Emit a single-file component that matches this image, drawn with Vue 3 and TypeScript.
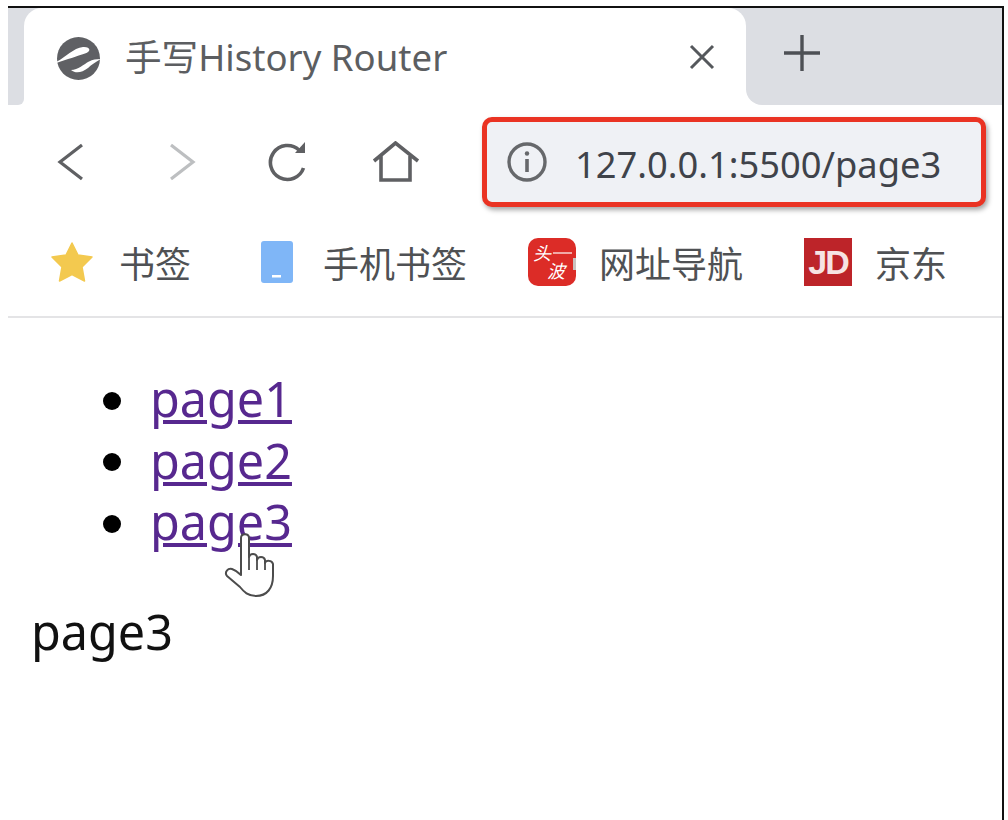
<script setup lang="ts">
interface Bookmark {
  label: string
  kind: 'star' | 'phone' | 'wave' | 'jd'
}

const bookmarks: Bookmark[] = [
  { label: '书签', kind: 'star' },
  { label: '手机书签', kind: 'phone' },
  { label: '网址导航', kind: 'wave' },
  { label: '京东', kind: 'jd' },
]

const pages = ['page1', 'page2', 'page3']
</script>

<template>
  <div class="frame">
    <div class="tabstrip">
      <div class="tab-gutter"></div>
      <div class="tab">
        <svg class="favicon" width="43" height="43" viewBox="0 0 43 43">
          <circle cx="21.500" cy="21.500" r="21.500" fill="#5f6064" />
          <path d="M-1 25 C8 21 16 11 26 10 C33 9.500 35 14 28 16.500 C20 19 9 23 -1 26 Z" fill="#fff" />
          <path d="M14 33 C21 33 27 27 32 24.500 C36 22.500 40 22 44 22 C39 25 35 27.500 31 31 C25 35.500 19 37 14 33 Z" fill="#fff" />
        </svg>
        <span class="tab-title">手写History Router</span>
        <svg class="tab-close" width="26" height="26" viewBox="0 0 26 26">
          <path d="M2 2 L24 24 M24 2 L2 24" stroke="#55585c" stroke-width="3" />
        </svg>
      </div>
      <div class="tab-rest">
        <svg class="new-tab" width="38" height="38" viewBox="0 0 38 38">
          <path d="M19 1 V37 M1 19 H37" stroke="#4d5055" stroke-width="3.400" />
        </svg>
      </div>
    </div>

    <div class="toolbar">
      <svg class="nav-icon" width="28" height="40" viewBox="0 0 28 40">
        <path d="M25 3 L3 20 L25 37" fill="none" stroke="#5f6063" stroke-width="3.200" />
      </svg>
      <svg class="nav-icon forward" width="28" height="40" viewBox="0 0 28 40">
        <path d="M3 3 L25 20 L3 37" fill="none" stroke="#bdbfc1" stroke-width="3.200" />
      </svg>
      <svg class="nav-icon reload" width="40" height="42" viewBox="0 0 40 42">
        <path d="M31 9 A17 17 0 1 0 35.500 27" fill="none" stroke="#5f6063" stroke-width="3.600" />
        <path d="M37 1 V12 H27 Z" fill="#5f6063" />
      </svg>
      <svg class="nav-icon home" width="48" height="42" viewBox="0 0 48 42">
        <path d="M2 20 L23.500 2 L46 20 M9 15 V39 H38 V15" fill="none" stroke="#5f6063" stroke-width="3.600" />
      </svg>
      <div class="address">
        <svg width="40" height="40" viewBox="0 0 40 40">
          <circle cx="20" cy="20" r="18" fill="none" stroke="#66686b" stroke-width="3.400" />
          <path d="M20 17 V30" stroke="#66686b" stroke-width="3.600" />
          <circle cx="20" cy="11.500" r="2.200" fill="#66686b" />
        </svg>
        <span class="url">127.0.0.1:5500/page3</span>
      </div>
    </div>

    <div class="bookmarks">
      <div v-for="b in bookmarks" :key="b.label" class="bookmark" :class="b.kind">
        <svg v-if="b.kind === 'star'" width="42" height="40" viewBox="0 0 42 40">
          <path d="M21 1 L27 13 L41 15 L31 25 L33.500 39 L21 32.500 L8.500 39 L11 25 L1 15 L15 13 Z" fill="#f3c94f" stroke="#f3c94f" stroke-width="1.500" stroke-linejoin="round" />
        </svg>
        <svg v-else-if="b.kind === 'phone'" width="32" height="42" viewBox="0 0 32 42">
          <rect width="32" height="42" rx="3" fill="#7fb6f7" />
          <rect x="11" y="34" width="9" height="2.500" fill="#fff" />
        </svg>
        <span v-else-if="b.kind === 'wave'" class="wave-logo"><i>头</i><i>波</i></span>
        <span v-else class="jd-logo">JD</span>
        <span class="bookmark-label">{{ b.label }}</span>
      </div>
    </div>

    <div class="page">
      <ul>
        <li v-for="p in pages" :key="p"><a href="#">{{ p }}</a></li>
      </ul>
      <div class="current">page3</div>

      <!-- hand cursor sits on top of the third link -->
      <svg class="cursor" width="52" height="66" viewBox="0 0 52 66">
        <path
          d="M17 40 V6 C17 1 25 1 25 6 V25 C26 21 32 21 33 25 V28 C34 24 40 24 41 28 V31 C42 28 48 28 49 32 V44 C49 56 43 64 32 64 C24 64 20 60 16 55 L3 44 C0 40 4 36 8 37 C11 38 14 40 17 43 Z"
          fill="#fff"
          stroke="#4c4c4c"
          stroke-width="2"
          stroke-linejoin="round"
        />
        <path d="M25 25 V38 M33 28 V38 M41 31 V38" stroke="#4c4c4c" stroke-width="1.800" fill="none" />
      </svg>
    </div>
  </div>
</template>

<style scoped>
.frame {
  margin: 6px 0 0 8px;
  width: 996px;
  height: 814px;
  box-sizing: border-box;
  border-top: 2px solid #111;
  border-right: 2px solid #111;
  font-family: 'Noto Sans', 'Noto Sans CJK SC', sans-serif;
  color: #5c5e61;
  overflow: hidden;
}

.tabstrip {
  height: 97px;
  display: flex;
  background: linear-gradient(#dcdee3 40px, #fff 40px);
}

.tab-gutter {
  width: 16px;
  background: #dcdee3;
  border-radius: 0 0 6px 0;
}

.tab {
  width: 722px;
  box-sizing: border-box;
  padding: 0 31px 0 33px;
  display: flex;
  align-items: center;
  background: #fff;
  border-radius: 18px 18px 0 0;
}

.favicon {
  margin-top: 3px;
}

.tab-title {
  margin: -3px 0 0 25px;
  flex: 1;
  font-size: 36.600px;
}

.tab-rest {
  flex: 1;
  padding-left: 37px;
  display: flex;
  align-items: center;
  background: #dcdee3;
  border-radius: 0 0 0 16px;
}

.new-tab {
  margin-top: -7px;
}

.toolbar {
  height: 111px;
  box-sizing: border-box;
  padding: 3px 16px 0 49px;
  display: flex;
  align-items: center;
}

.nav-icon.forward {
  margin-left: 83px;
}

.nav-icon.reload {
  margin-left: 72px;
}

.nav-icon.home {
  margin-left: 64px;
}

.address {
  margin-left: 62px;
  flex: 1;
  height: 90px;
  box-sizing: border-box;
  padding-left: 20px;
  display: flex;
  align-items: center;
  gap: 28px;
  background: #eff1f5;
  border: 5px solid #ea3323;
  border-radius: 10px;
  box-shadow: 2px 3px 5px rgba(0, 0, 0, 0.35);
}

.url {
  margin-top: 3px;
  font-size: 36.300px;
  color: #3f434a;
}

.bookmarks {
  height: 92px;
  padding: 0 0 8px 43px;
  display: flex;
  align-items: center;
  border-bottom: 2px solid #e4e4e6;
}

.bookmark {
  display: flex;
  align-items: center;
}

.bookmark-label {
  font-size: 36px;
  color: #4f5154;
}

.star .bookmark-label { margin-left: 26px; }
.phone { margin-left: 70px; }
.phone .bookmark-label { margin-left: 30px; }
.wave { margin-left: 61px; }
.wave .bookmark-label { margin-left: 23px; }
.jd { margin-left: 61px; }
.jd .bookmark-label { margin-left: 23px; }

.wave-logo {
  position: relative;
  width: 48px;
  height: 48px;
  border-radius: 10px;
  background: #dc2c27;
  color: #fff;
  font-size: 18px;
  line-height: 18px;
  display: flex;
  flex-direction: column;
  padding: 6px 0 0 5px;
  box-sizing: border-box;
}

.wave-logo i:last-child {
  margin-left: 14px;
}

/* thin rule and grey sliver that the favicon shows on its right */
.wave-logo::before {
  content: '';
  position: absolute;
  left: 25px;
  top: 14px;
  width: 19px;
  height: 2px;
  background: #f0a9a6;
}

.wave-logo::after {
  content: '';
  position: absolute;
  right: 0;
  top: 20px;
  width: 3px;
  height: 12px;
  background: #c9c3c0;
}

.jd-logo {
  width: 48px;
  height: 48px;
  background: #bd2429;
  color: #f6e3e3;
  font-family: 'Liberation Sans', sans-serif;
  font-size: 34px;
  font-weight: 700;
  line-height: 48px;
  text-align: center;
  letter-spacing: -2px;
}

.page {
  position: relative;
  color: #111;
  font-size: 48.500px;
  line-height: 61.500px;
}

ul {
  margin: 0;
  padding: 50px 0 0 95px;
  list-style: none;
}

li {
  display: flex;
  align-items: center;
}

li::before {
  content: '';
  width: 18px;
  height: 18px;
  margin: 4px 29px 0 0;
  border-radius: 50%;
  background: #000;
}

a {
  color: #57288f;
  text-decoration: underline;
}

.current {
  margin: 48px 0 0 23px;
}

.cursor {
  position: absolute;
  left: 216px;
  top: 214px;
}
</style>
